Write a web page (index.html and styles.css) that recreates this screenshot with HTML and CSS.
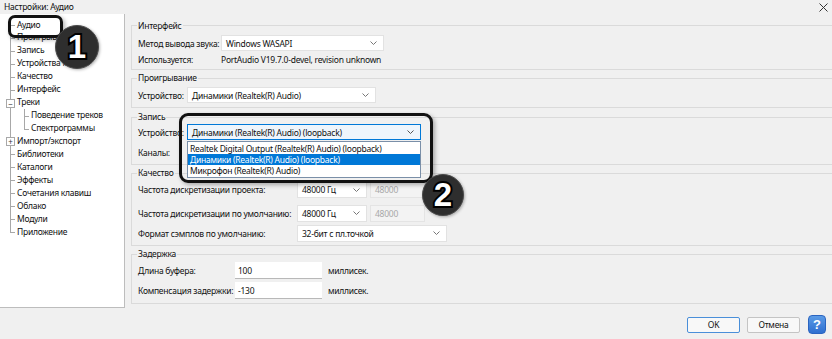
FILE: index.html
```html
<!DOCTYPE html>
<html lang="ru">
<head>
<meta charset="utf-8">
<title>Настройки: Аудио</title>
<link rel="stylesheet" href="styles.css">
</head>
<body>
<div class="window">
  <div class="titlebar">
    <span class="title">Настройки: Аудио</span>
    <svg class="close" width="9" height="9" viewBox="0 0 9 9"><path d="M0.5 0.5L8.5 8.5M8.5 0.5L0.5 8.5" stroke="#333" stroke-width="1"/></svg>
  </div>
  <div class="main">
    <div class="tree">
      <ul class="root">
        <li class="first">Аудио</li>
        <li>Проигрыватель</li>
        <li>Запись</li>
        <li>Устройства MIDI</li>
        <li>Качество</li>
        <li>Интерфейс</li>
        <li><span class="exp">−</span>Треки
          <ul class="sub">
            <li>Поведение треков</li>
            <li>Спектрограммы</li>
          </ul>
        </li>
        <li><span class="exp">+</span>Импорт/экспорт</li>
        <li>Библиотеки</li>
        <li>Каталоги</li>
        <li>Эффекты</li>
        <li>Сочетания клавиш</li>
        <li>Облако</li>
        <li>Модули</li>
        <li>Приложение</li>
      </ul>
    </div>
    <div class="panel">
      <fieldset class="grp g-iface">
        <legend>Интерфейс</legend>
        <div class="row r-first">
          <span class="lbl c83">Метод вывода звука:</span>
          <div class="combo w163"><span>Windows WASAPI</span><svg class="chev" width="7" height="4" viewBox="0 0 7 4"><polyline points="0.5,0.5 3.5,3.5 6.5,0.5" fill="none" stroke="#777" stroke-width="1"/></svg></div>
        </div>
        <div class="row r-text">
          <span class="lbl c83">Используется:</span>
          <span>PortAudio V19.7.0-devel, revision unknown</span>
        </div>
      </fieldset>
      <fieldset class="grp g-play">
        <legend>Проигрывание</legend>
        <div class="row r-play">
          <span class="lbl c49">Устройство:</span>
          <div class="combo w189"><span>Динамики (Realtek(R) Audio)</span><svg class="chev" width="7" height="4" viewBox="0 0 7 4"><polyline points="0.5,0.5 3.5,3.5 6.5,0.5" fill="none" stroke="#777" stroke-width="1"/></svg></div>
        </div>
      </fieldset>
      <fieldset class="grp g-rec">
        <legend>Запись</legend>
        <div class="row r-rec">
          <span class="lbl c49">Устройство:</span>
          <div class="combo w233 focused"><span>Динамики (Realtek(R) Audio) (loopback)</span><svg class="chev" width="7" height="4" viewBox="0 0 7 4"><polyline points="0.5,0.5 3.5,3.5 6.5,0.5" fill="none" stroke="#555" stroke-width="1"/></svg>
            <ul class="dropdown">
              <li>Realtek Digital Output (Realtek(R) Audio) (loopback)</li>
              <li class="sel">Динамики (Realtek(R) Audio) (loopback)</li>
              <li>Микрофон (Realtek(R) Audio)</li>
            </ul>
          </div>
        </div>
        <div class="row r-chan">
          <span class="lbl c49">Каналы:</span>
        </div>
      </fieldset>
      <fieldset class="grp g-qual">
        <legend>Качество</legend>
        <div class="row r-q1">
          <span class="lbl c159">Частота дискретизации проекта:</span>
          <div class="combo w70"><span>48000 Гц</span><svg class="chev" width="7" height="4" viewBox="0 0 7 4"><polyline points="0.5,0.5 3.5,3.5 6.5,0.5" fill="none" stroke="#777" stroke-width="1"/></svg></div>
          <div class="disabled">48000</div>
        </div>
        <div class="row r-q2">
          <span class="lbl c159">Частота дискретизации по умолчанию:</span>
          <div class="combo w70"><span>48000 Гц</span><svg class="chev" width="7" height="4" viewBox="0 0 7 4"><polyline points="0.5,0.5 3.5,3.5 6.5,0.5" fill="none" stroke="#777" stroke-width="1"/></svg></div>
          <div class="disabled">48000</div>
        </div>
        <div class="row r-q3">
          <span class="lbl c159">Формат сэмплов по умолчанию:</span>
          <div class="combo w150"><span>32-бит с пл.точкой</span><svg class="chev" width="7" height="4" viewBox="0 0 7 4"><polyline points="0.5,0.5 3.5,3.5 6.5,0.5" fill="none" stroke="#777" stroke-width="1"/></svg></div>
        </div>
      </fieldset>
      <fieldset class="grp g-lat">
        <legend>Задержка</legend>
        <div class="row r-l1">
          <span class="lbl c97">Длина буфера:</span>
          <div class="textbox">100</div>
          <span class="unit">миллисек.</span>
        </div>
        <div class="row r-l2">
          <span class="lbl c97">Компенсация задержки:</span>
          <div class="textbox">-130</div>
          <span class="unit">миллисек.</span>
        </div>
      </fieldset>
    </div>
  </div>
  <div class="footer">
    <div class="btn default">OK</div>
    <div class="btn">Отмена</div>
    <div class="help">?</div>
  </div>

  <div class="mark mark-1"></div>
  <div class="badge badge-1">1</div>
  <div class="mark mark-2"></div>
  <div class="badge badge-2">2</div>
</div>
</body>
</html>
```

FILE: styles.css
```css
html, body {
  margin: 0;
  padding: 0;
  background: #f0f0f0;
  overflow: hidden;
}
body {
  width: 832px;
  height: 339px;
  font-family: "Noto Sans", "DejaVu Sans", sans-serif;
  font-size: 8.5px;
  letter-spacing: -0.25px;
  color: #111;
}
.window {
  position: relative;
  width: 832px;
  height: 339px;
  overflow: hidden;
}
.titlebar {
  height: 14px;
  display: flex;
  align-items: center;
  justify-content: space-between;
  padding: 0 4px;
  line-height: 12px;
}
.main {
  display: flex;
  height: 294px;
}
.tree {
  flex: none;
  width: 124px;
  height: 293px;
  background: #fff;
  border-right: 1px solid #bdbdbd;
  border-bottom: 1px solid #bdbdbd;
}
.tree ul {
  list-style: none;
  margin: 0;
  padding: 0;
}
.root {
  padding-top: 4.5px !important;
}
.root > li {
  position: relative;
  padding-left: 17px;
  line-height: 12.94px;
  white-space: nowrap;
}
.root > li::before {
  content: "";
  position: absolute;
  left: 10px;
  top: 0;
  bottom: 0;
  border-left: 1px solid #a8a8a8;
}
.root > li.first::before {
  top: 6.5px;
}
.root > li:last-child::before {
  bottom: auto;
  height: 6.5px;
}
.root > li::after {
  content: "";
  position: absolute;
  left: 10px;
  top: 6.5px;
  width: 5px;
  border-top: 1px solid #a8a8a8;
}
.sub {
  margin-left: -17px !important;
}
.sub > li {
  position: relative;
  padding-left: 31px;
  line-height: 12.94px;
}
.sub > li::before {
  content: "";
  position: absolute;
  left: 24px;
  top: 0;
  bottom: 0;
  border-left: 1px solid #a8a8a8;
}
.sub > li:last-child::before {
  bottom: auto;
  height: 6.5px;
}
.sub > li::after {
  content: "";
  position: absolute;
  left: 24px;
  top: 6.5px;
  width: 5px;
  border-top: 1px solid #a8a8a8;
}
.exp {
  position: absolute;
  z-index: 1;
  left: 6px;
  top: 2.5px;
  width: 7px;
  height: 7px;
  border: 1px solid #a8a8a8;
  background: #fff;
  font-size: 8px;
  letter-spacing: 0;
  line-height: 7px;
  text-align: center;
  color: #333;
}
.panel {
  flex: none;
  width: 740px;
  margin-left: 6px;
  padding-top: 5.5px;
}
.grp {
  box-sizing: border-box;
  margin: 2px 0 0 0;
  padding: 0 6px;
  border: 1px solid #dadada;
  min-width: 0;
}
.grp legend {
  padding: 0 1px;
  margin-left: -1px;
  line-height: 12px;
}
.g-iface { margin-top: 0; height: 50.5px; }
.g-play { height: 36px; }
.g-rec { margin-top: 3px; height: 54px; }
.g-qual { height: 79px; }
.g-lat { height: 56px; }

.row {
  display: flex;
  align-items: center;
  white-space: nowrap;
}
.lbl { flex: none; }
.c83 { width: 83px; }
.c49 { width: 49px; }
.c159 { width: 159px; }
.c97 { width: 97px; }

.r-first { margin-top: 3.5px; height: 16px; }
.r-text { margin-top: 1px; height: 14px; }
.r-play { margin-top: 3px; height: 16px; }
.r-rec { margin-top: 1px; height: 16px; }
.r-chan { margin-top: 5px; height: 14px; }
.r-q1 { margin-top: 2px; height: 17px; }
.r-q2 { margin-top: 6.5px; height: 17px; }
.r-q3 { margin-top: 3px; height: 17px; }
.r-l1 { margin-top: 2px; height: 17px; }
.r-l2 { margin-top: 3px; height: 17px; }

.combo {
  position: relative;
  box-sizing: border-box;
  height: 100%;
  display: flex;
  align-items: center;
  justify-content: space-between;
  padding: 0 6px 0 4px;
  background: #fff;
  border: 1px solid #e2e2e2;
}
.combo.focused {
  border-color: #0078d7;
  background: #eef5fc;
}
.w163 { width: 163px; }
.w189 { width: 189px; }
.w233 { width: 234px; }
.w70 { width: 70px; }
.w150 { width: 150px; }
.chev { flex: none; }

.dropdown {
  position: absolute;
  z-index: 2;
  left: -1px;
  top: 16px;
  box-sizing: border-box;
  width: 234px;
  margin: 0;
  padding: 1px 0;
  list-style: none;
  background: #fff;
  border: 1px solid #7a8fa8;
}
.dropdown li {
  height: 11px;
  line-height: 11px;
  padding-left: 2px;
}
.dropdown li.sel {
  background: #0078d7;
  color: #fff;
}
.disabled {
  box-sizing: border-box;
  width: 55px;
  height: 100%;
  margin-left: 3px;
  padding-left: 4px;
  display: flex;
  align-items: center;
  color: #a8a8a8;
  background: #f3f3f3;
  border: 1px solid #e4e4e4;
}
.textbox {
  box-sizing: border-box;
  width: 87px;
  height: 100%;
  padding-left: 3px;
  display: flex;
  align-items: center;
  background: #fff;
  border-bottom: 1px solid #b8b8b8;
}
.unit { margin-left: 6px; }

.footer {
  display: flex;
  justify-content: flex-end;
  align-items: center;
  gap: 7px;
  padding: 7px 6px 0 0;
}
.btn {
  box-sizing: border-box;
  width: 53px;
  height: 16px;
  display: flex;
  align-items: center;
  justify-content: center;
  background: #f8f8f8;
  border: 1px solid #c4c4c4;
  border-radius: 2px;
}
.btn.default {
  border-color: #4a8fd9;
}
.help {
  box-sizing: border-box;
  width: 18px;
  height: 19px;
  margin-left: 1px;
  border-radius: 4px;
  background: linear-gradient(#5b9be6, #2f6fd0);
  border: 1px solid #2a64c0;
  color: #fff;
  font-family: "Liberation Sans", sans-serif;
  font-weight: bold;
  font-size: 13px;
  letter-spacing: 0;
  display: flex;
  align-items: center;
  justify-content: center;
}

.mark {
  position: absolute;
  z-index: 5;
  box-sizing: border-box;
  border: 3px solid #111;
  border-radius: 7px;
  box-shadow: 2px 2px 4px rgba(0,0,0,0.3);
}
.mark-1 {
  left: 8px;
  top: 15px;
  width: 55px;
  height: 23px;
}
.mark-2 {
  left: 179px;
  top: 113px;
  width: 254px;
  height: 70px;
  border-radius: 9px;
}
.badge {
  position: absolute;
  z-index: 6;
  box-sizing: border-box;
  border-radius: 50%;
  background: #2e2e2e;
  border: 1px solid #4a4a4a;
  color: #fff;
  font-family: "Liberation Sans", sans-serif;
  font-weight: bold;
  font-size: 33px;
  letter-spacing: 0;
  display: flex;
  align-items: center;
  justify-content: center;
  -webkit-text-stroke: 4px #000;
  paint-order: stroke fill;
  box-shadow: 1px 1px 3px rgba(0,0,0,0.3);
}
.badge-1 {
  left: 55px;
  top: 25px;
  width: 44px;
  height: 44px;
}
.badge-2 {
  left: 422px;
  top: 174px;
  width: 42px;
  height: 42px;
}
```
